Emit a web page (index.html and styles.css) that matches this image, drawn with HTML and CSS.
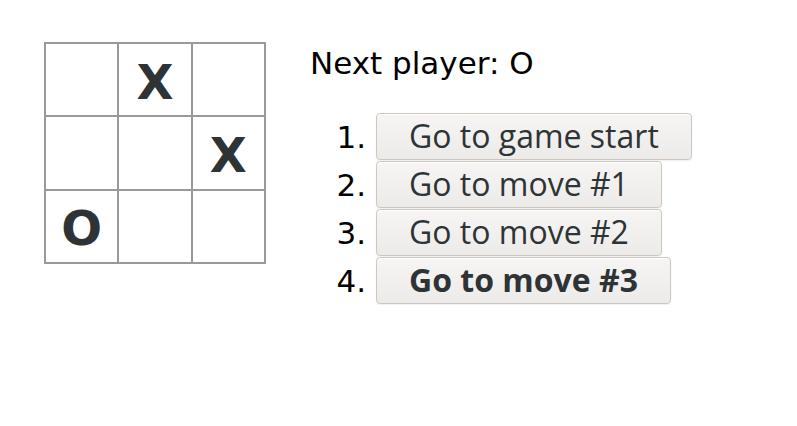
FILE: index.html
```html
<!DOCTYPE html>
<html>
<head>
<meta charset="utf-8">
<link rel="stylesheet" href="styles.css">
</head>
<body>
<div class="game">
  <div class="board">
    <button class="square"></button>
    <button class="square">X</button>
    <button class="square"></button>
    <button class="square"></button>
    <button class="square"></button>
    <button class="square">X</button>
    <button class="square">O</button>
    <button class="square"></button>
    <button class="square"></button>
  </div>
  <div class="info">
    <div class="status">Next player: O</div>
    <ol class="moves">
      <li><button class="move">Go to game start</button></li>
      <li><button class="move">Go to move #1</button></li>
      <li><button class="move">Go to move #2</button></li>
      <li><button class="move current">Go to move #3</button></li>
    </ol>
  </div>
</div>
</body>
</html>
```

FILE: styles.css
```css
html, body {
  margin: 0;
  padding: 0;
  background: #ffffff;
}

body {
  font-family: "DejaVu Sans", sans-serif;
  color: #000000;
}

.game {
  display: flex;
  flex-direction: row;
  align-items: flex-start;
  padding: 42px 0 0 44px;
}

.board {
  display: grid;
  grid-template-columns: repeat(3, 1fr);
  grid-template-rows: repeat(3, 1fr);
  gap: 2px;
  padding: 2px;
  width: 222px;
  height: 222px;
  box-sizing: border-box;
  background: #999999;
}

.square {
  background: #ffffff;
  border: none;
  margin: 0;
  padding: 4px 0 0 0;
  font-family: "DejaVu Sans", sans-serif;
  font-weight: bold;
  font-size: 48px;
  color: #2e3436;
  line-height: 1;
}

.info {
  margin-left: 44px;
}

.status {
  font-size: 31px;
  line-height: 36px;
  margin-top: 3px;
}

.moves {
  margin: 32px 0 0 0;
  padding-left: 66px;
  font-size: 31px;
}

.moves li {
  height: 48px;
  line-height: 48px;
}

.move {
  font-family: "Open Sans", sans-serif;
  font-size: 32px;
  color: #2e3436;
  height: 47px;
  padding: 0 32px 2px 32px;
  margin: 0;
  vertical-align: top;
  border: 1px solid #cdc7c2;
  border-radius: 4px;
  background: linear-gradient(to bottom, #f6f5f4, #edebe9);
  box-shadow: inset 0 1px #ffffff, 0 1px 2px rgba(0, 0, 0, 0.07);
}

.move.current {
  font-weight: bold;
}
```
